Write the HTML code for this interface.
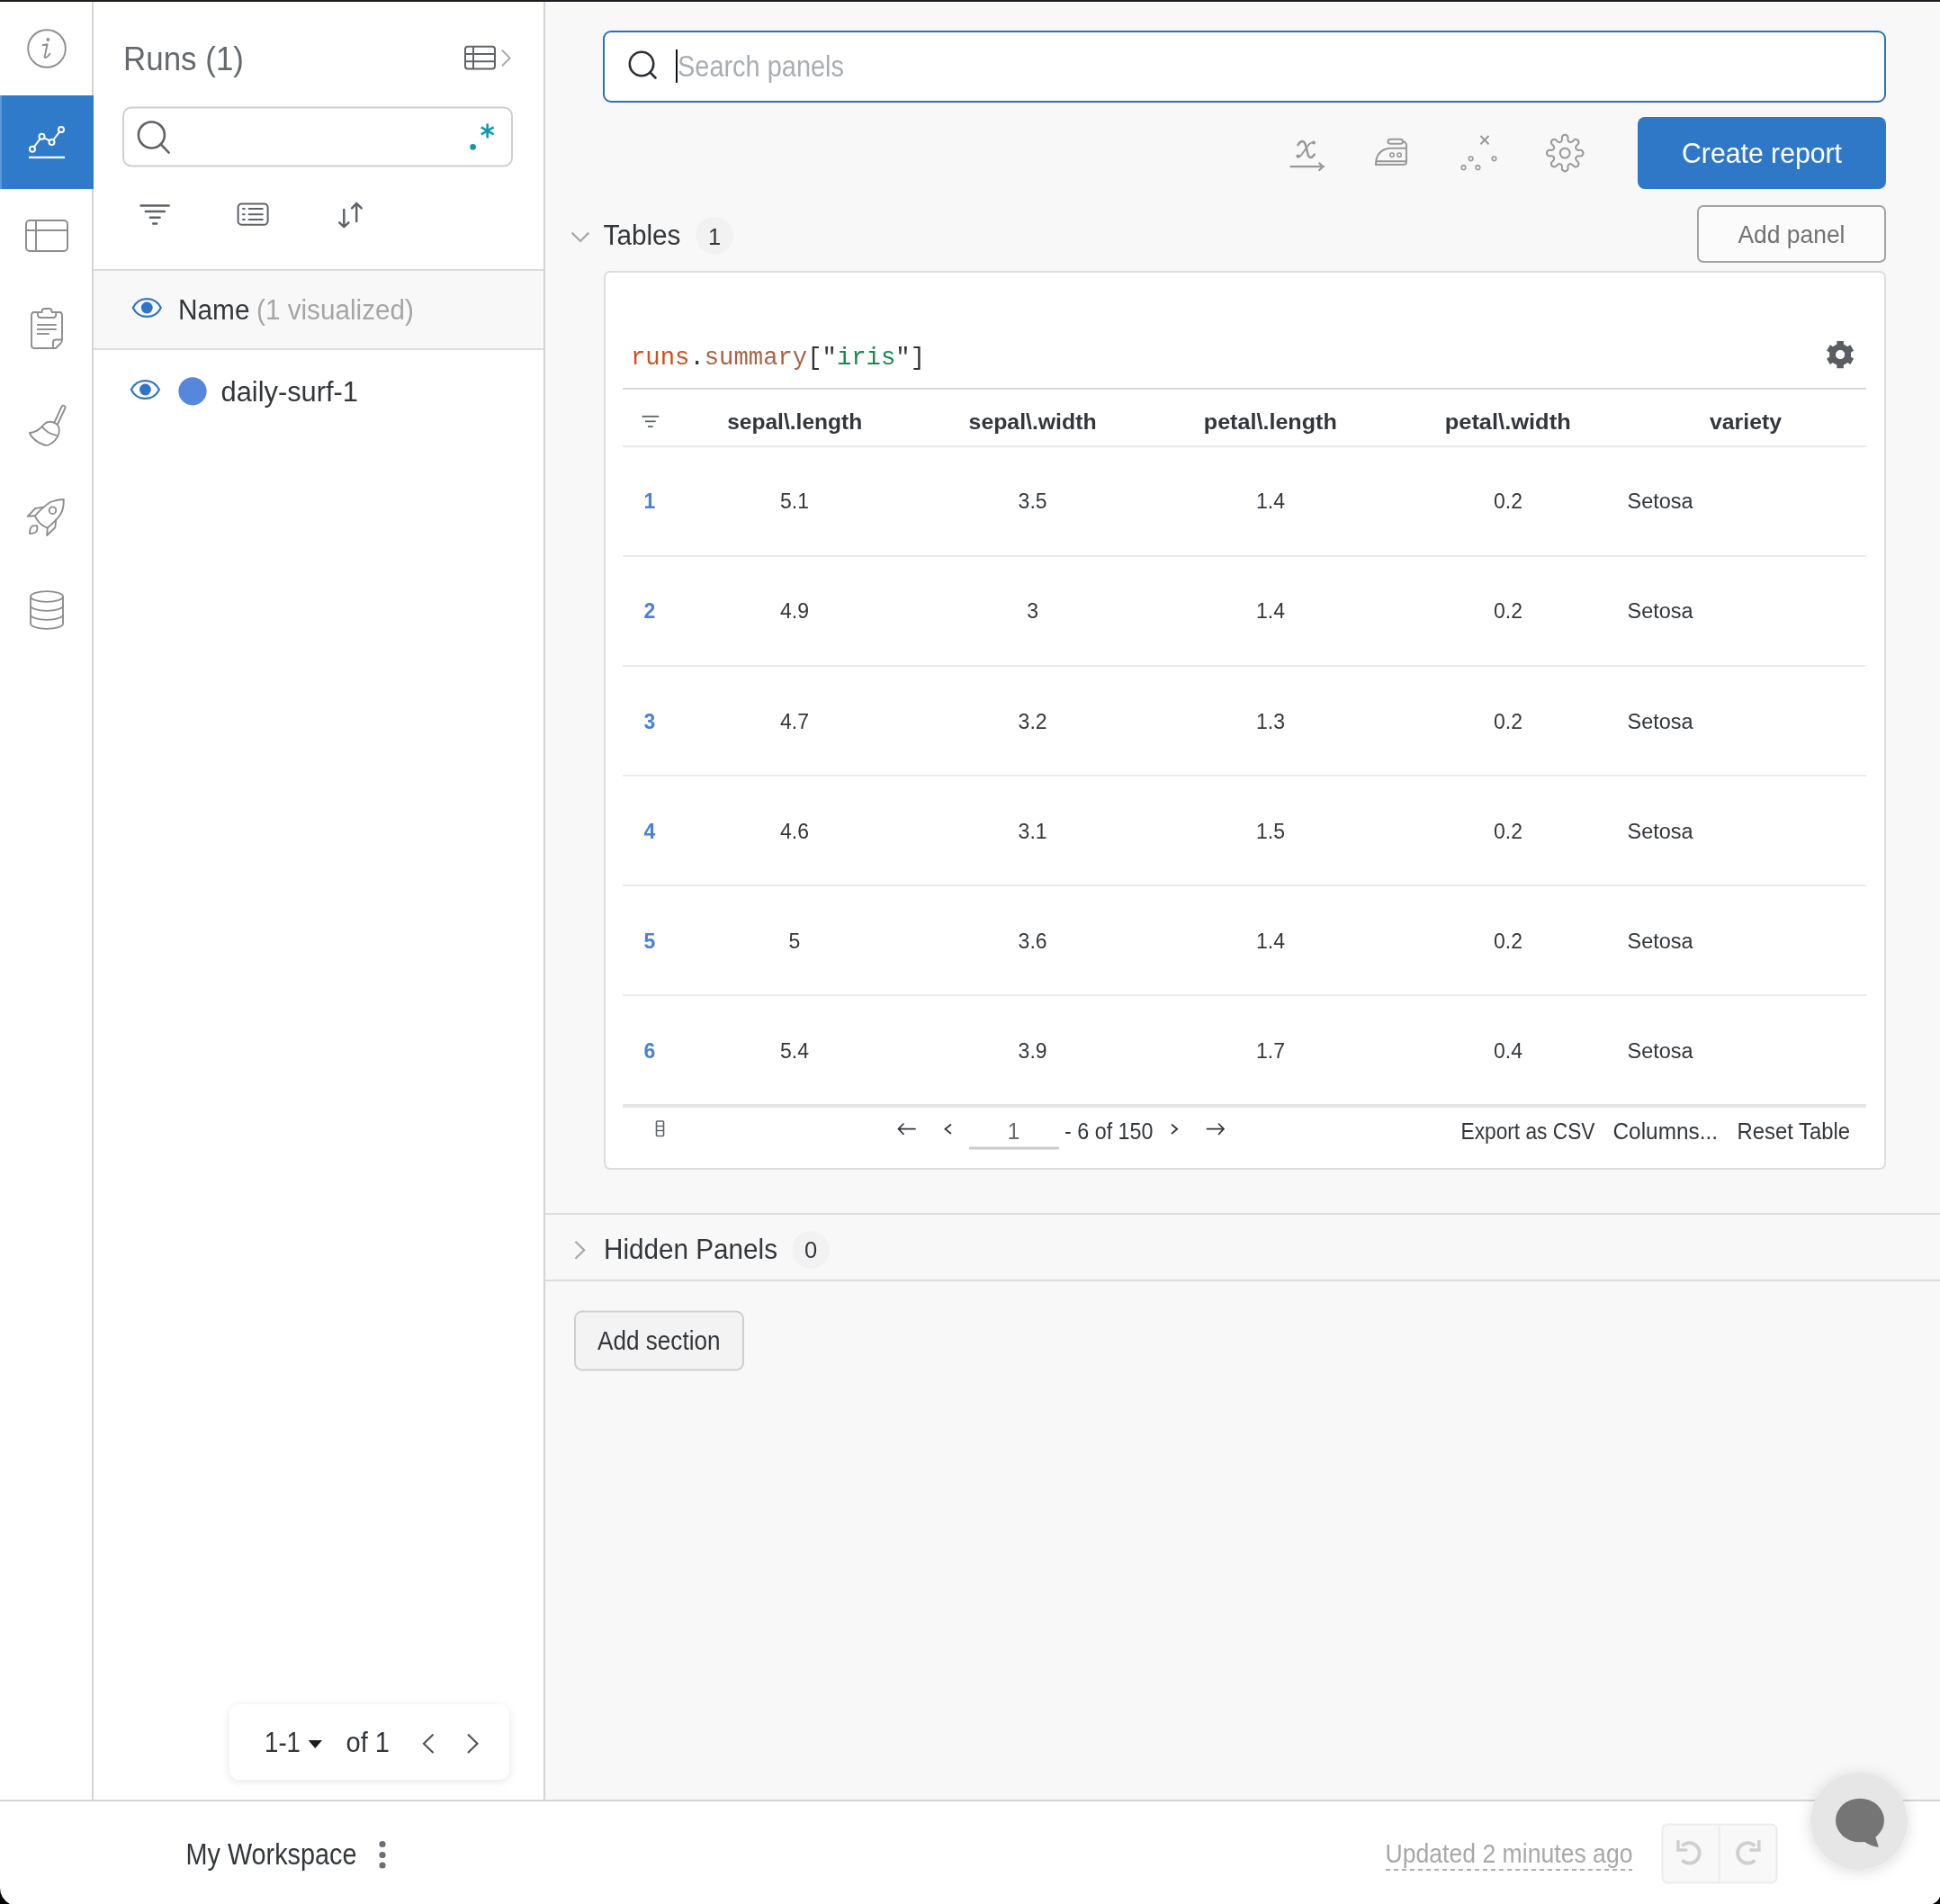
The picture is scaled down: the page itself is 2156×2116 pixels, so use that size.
<!DOCTYPE html>
<html><head><meta charset="utf-8"><title>Workspace</title>
<style>html,body{margin:0;padding:0;background:#fff;overflow:hidden;font-family:"Liberation Sans",sans-serif} svg{display:block;will-change:transform;opacity:0.999}</style>
</head><body>
<svg width="2156" height="2116" viewBox="0 0 2156 2116"><defs>
<filter id="sh" x="-20%" y="-40%" width="140%" height="180%"><feDropShadow dx="0" dy="2" stdDeviation="5" flood-color="#000" flood-opacity="0.10"/></filter>
<filter id="sh2" x="-30%" y="-30%" width="160%" height="160%"><feDropShadow dx="0" dy="2" stdDeviation="8" flood-color="#000" flood-opacity="0.14"/></filter>
</defs><rect x="0" y="0" width="2156" height="2116" fill="#ffffff"/><rect x="606" y="3" width="1550" height="1997" fill="#f8f8f8"/><rect x="0" y="0" width="2156" height="2" fill="#1b1d22"/><rect x="102" y="2" width="2" height="1998" fill="#d4d4d4"/><rect x="604" y="2" width="2" height="1998" fill="#d4d4d4"/><rect x="0" y="2000" width="2156" height="2" fill="#d4d4d4"/><rect x="0" y="106" width="104" height="104" fill="#2f7bca"/><rect x="0" y="106" width="2" height="104" fill="#ffffff" fill-opacity="0.22"/><circle cx="52" cy="54" r="20.8" fill="none" stroke="#8e8e8e" stroke-width="1.9"/><circle cx="53.3" cy="44" r="1.9" fill="#8e8e8e"/><path d="M47.6,50.3 L52.6,49.2 L49.6,62.8 Q49.4,64.3 51,63.9 Q53.6,63 55.4,59.8" fill="none" stroke="#8e8e8e" stroke-width="1.9" stroke-linejoin="round" stroke-linecap="round"/><line x1="37.80" y1="163.40" x2="44.70" y2="154.20" stroke="#fff" stroke-width="2"/><line x1="49.12" y1="153.25" x2="54.88" y2="156.45" stroke="#fff" stroke-width="2"/><line x1="59.30" y1="155.50" x2="66.20" y2="146.30" stroke="#fff" stroke-width="2"/><circle cx="36" cy="165.8" r="3" fill="none" stroke="#fff" stroke-width="2"/><circle cx="46.5" cy="151.8" r="3" fill="none" stroke="#fff" stroke-width="2"/><circle cx="57.5" cy="157.9" r="3" fill="none" stroke="#fff" stroke-width="2"/><circle cx="68" cy="143.9" r="3" fill="none" stroke="#fff" stroke-width="2"/><rect x="32" y="173.8" width="40" height="2.3" fill="#fff"/><rect x="29" y="245" width="46" height="34" rx="4" fill="none" stroke="#8e8e8e" stroke-width="2"/><line x1="29" y1="256" x2="75" y2="256" stroke="#8e8e8e" stroke-width="2"/><line x1="40" y1="245" x2="40" y2="279" stroke="#8e8e8e" stroke-width="2"/><path d="M59,387 L38.5,387 Q35,387 35,383.5 L35,350.5 Q35,347 38.5,347 L46.6,347 L46.6,346 Q46.6,343 50,343 L54.5,343 Q57.6,343 57.6,346 L57.6,347 L66,347 Q69,347 69,350.5 L69,377.5 Q69,380 67,382 L62,387 Q61,387 59,387 Z" fill="none" stroke="#8e8e8e" stroke-width="1.9" stroke-linejoin="round"/><path d="M42,347 L42,350 Q42,353 45.5,353 L59,353 Q62.2,353 62.2,350 L62.2,347" fill="none" stroke="#8e8e8e" stroke-width="1.9"/><path d="M59,387 L59,380.5 Q59,377.5 62,377.5 L69,377.5" fill="none" stroke="#8e8e8e" stroke-width="1.9"/><line x1="41" y1="361" x2="62.8" y2="361" stroke="#8e8e8e" stroke-width="1.9"/><line x1="41" y1="366" x2="62.8" y2="366" stroke="#8e8e8e" stroke-width="1.9"/><line x1="41" y1="371" x2="54.7" y2="371" stroke="#8e8e8e" stroke-width="1.9"/><path d="M60.6,469.3 L68.4,452 Q69.6,450 71.4,451 Q73,452 72.3,454 L64,471.5" fill="none" stroke="#8e8e8e" stroke-width="1.9" stroke-linecap="round"/><path d="M46.8,474 Q53,465.5 62.5,471 Q67,474 65.3,482 Q63,490 54,494.5 Q52,495.5 48,494 Q37,490 32.7,481 Q40,481 46.8,474 Z" fill="none" stroke="#8e8e8e" stroke-width="1.9" stroke-linejoin="round"/><path d="M46.8,474 Q52,482 63.5,484" fill="none" stroke="#8e8e8e" stroke-width="1.9"/><path d="M38.8,573.3 Q48,563 56,558 Q63,555 70.8,555 Q71,566 67,572 Q63,578 52.7,586.7 Q43,583 38.8,573.3 Z" fill="none" stroke="#8e8e8e" stroke-width="1.9" stroke-linejoin="round"/><path d="M48.5,563.6 L39.3,565 L30.6,573.8 L38.8,573.3" fill="none" stroke="#8e8e8e" stroke-width="1.9" stroke-linejoin="round"/><path d="M62.3,576.8 L61.3,586.3 L52.2,595 L52.7,586.7" fill="none" stroke="#8e8e8e" stroke-width="1.9" stroke-linejoin="round"/><circle cx="58.5" cy="567.2" r="3.8" fill="none" stroke="#8e8e8e" stroke-width="1.9"/><path d="M33,593 Q33,587 35.5,585 Q38,583.5 41.3,584.5 Q42,588 40.5,590.5 Q38.5,593 33,593 Z" fill="none" stroke="#8e8e8e" stroke-width="1.9" stroke-linejoin="round"/><ellipse cx="52" cy="663" rx="18" ry="5.9" fill="none" stroke="#8e8e8e" stroke-width="1.9"/><path d="M34,673 A18,5.9 0 0 0 70,673" fill="none" stroke="#8e8e8e" stroke-width="1.9"/><path d="M34,683 A18,5.9 0 0 0 70,683" fill="none" stroke="#8e8e8e" stroke-width="1.9"/><path d="M34,693 A18,5.9 0 0 0 70,693" fill="none" stroke="#8e8e8e" stroke-width="1.9"/><line x1="34" y1="663" x2="34" y2="693" stroke="#8e8e8e" stroke-width="1.9"/><line x1="70" y1="663" x2="70" y2="693" stroke="#8e8e8e" stroke-width="1.9"/><text x="137" y="77.6" font-family="Liberation Sans" font-size="37" fill="#65696e" textLength="134" lengthAdjust="spacingAndGlyphs">Runs (1)</text><rect x="517" y="51.8" width="33" height="24.7" rx="3" fill="none" stroke="#5f6368" stroke-width="2"/><line x1="517" y1="60" x2="550" y2="60" stroke="#5f6368" stroke-width="2"/><line x1="517" y1="68.3" x2="550" y2="68.3" stroke="#5f6368" stroke-width="2"/><line x1="526" y1="51.8" x2="526" y2="76.5" stroke="#5f6368" stroke-width="2"/><path d="M558,55.7 L566.6,64.5 L558,73.2" fill="none" stroke="#aaaaaa" stroke-width="2"/><rect x="137" y="119.4" width="432" height="65" rx="9" fill="#fff" stroke="#cfcfcf" stroke-width="2"/><circle cx="168.4" cy="150" r="14.5" fill="none" stroke="#5f6368" stroke-width="2.6"/><line x1="178.8" y1="160.4" x2="187.6" y2="169.6" stroke="#5f6368" stroke-width="2.6" stroke-linecap="round"/><circle cx="525.6" cy="163.4" r="3.3" fill="#1199aa"/><line x1="541.70" y1="137.40" x2="541.70" y2="153.40" stroke="#1199aa" stroke-width="2.6"/><line x1="534.77" y1="141.40" x2="548.63" y2="149.40" stroke="#1199aa" stroke-width="2.6"/><line x1="548.63" y1="141.40" x2="534.77" y2="149.40" stroke="#1199aa" stroke-width="2.6"/><line x1="156.6" y1="228.4" x2="187.60000000000002" y2="228.4" stroke="#5f6368" stroke-width="2.5" stroke-linecap="round"/><line x1="161.79999999999998" y1="235" x2="182.8" y2="235" stroke="#5f6368" stroke-width="2.5" stroke-linecap="round"/><line x1="166.79999999999998" y1="241.7" x2="177.60000000000002" y2="241.7" stroke="#5f6368" stroke-width="2.5" stroke-linecap="round"/><line x1="170.2" y1="248.6" x2="174.10000000000002" y2="248.6" stroke="#5f6368" stroke-width="2.5" stroke-linecap="round"/><rect x="264.6" y="226.6" width="33" height="23.2" rx="4" fill="none" stroke="#5f6368" stroke-width="2"/><line x1="270" y1="232" x2="271.8" y2="232" stroke="#5f6368" stroke-width="2" stroke-linecap="round"/><line x1="276.6" y1="232" x2="291.8" y2="232" stroke="#5f6368" stroke-width="2" stroke-linecap="round"/><line x1="270" y1="238.3" x2="271.8" y2="238.3" stroke="#5f6368" stroke-width="2" stroke-linecap="round"/><line x1="276.6" y1="238.3" x2="291.8" y2="238.3" stroke="#5f6368" stroke-width="2" stroke-linecap="round"/><line x1="270" y1="244.1" x2="271.8" y2="244.1" stroke="#5f6368" stroke-width="2" stroke-linecap="round"/><line x1="276.6" y1="244.1" x2="291.8" y2="244.1" stroke="#5f6368" stroke-width="2" stroke-linecap="round"/><path d="M382.3,233 L382.3,251.4 M377.2,247.3 L382.3,252.2 L387.4,247.3" fill="none" stroke="#5f6368" stroke-width="2.5" stroke-linecap="round" stroke-linejoin="round"/><path d="M396.2,226 L396.2,246 M391.1,231.3 L396.2,226 L401.7,231.3" fill="none" stroke="#5f6368" stroke-width="2.5" stroke-linecap="round" stroke-linejoin="round"/><rect x="104" y="299" width="500" height="2" fill="#dcdcdc"/><rect x="104" y="301" width="500" height="86" fill="#f8f8f8"/><rect x="104" y="387" width="500" height="2" fill="#dcdcdc"/><path d="M147.8,342 C154.3,328.7 172.3,328.7 178.8,342 C172.3,355.3 154.3,355.3 147.8,342 Z" fill="none" stroke="#2f74c6" stroke-width="2.2" stroke-linejoin="round"/><circle cx="163.3" cy="342" r="6.4" fill="#2f74c6"/><text x="198" y="355" font-family="Liberation Sans" font-size="31" fill="#33373b" textLength="79.5" lengthAdjust="spacingAndGlyphs">Name</text><text x="285" y="355" font-family="Liberation Sans" font-size="31" fill="#a6a6a6" textLength="175" lengthAdjust="spacingAndGlyphs">(1 visualized)</text><path d="M145.9,433 C152.4,419.7 170.4,419.7 176.9,433 C170.4,446.3 152.4,446.3 145.9,433 Z" fill="none" stroke="#2f74c6" stroke-width="2.2" stroke-linejoin="round"/><circle cx="161.4" cy="433" r="6.4" fill="#2f74c6"/><circle cx="214" cy="434.8" r="15.6" fill="#5588dd"/><text x="245.5" y="445.5" font-family="Liberation Sans" font-size="31" fill="#33373b" textLength="152.5" lengthAdjust="spacingAndGlyphs">daily-surf-1</text><rect x="255" y="1894" width="311" height="84" rx="12" fill="#fff" filter="url(#sh)"/><text x="294" y="1947" font-family="Liberation Sans" font-size="31" fill="#33373b" textLength="40" lengthAdjust="spacingAndGlyphs">1-1</text><path d="M342.6,1934 L358,1934 L350.3,1943 Z" fill="#1b1d22"/><text x="384.5" y="1947" font-family="Liberation Sans" font-size="31" fill="#33373b" textLength="48.5" lengthAdjust="spacingAndGlyphs">of 1</text><path d="M481.5,1927.5 L471,1937.7 L481.5,1948" fill="none" stroke="#555" stroke-width="2.2"/><path d="M520,1927.5 L530.5,1937.7 L520,1948" fill="none" stroke="#555" stroke-width="2.2"/><text x="206.5" y="2071.7" font-family="Liberation Sans" font-size="33" fill="#33373b" textLength="190" lengthAdjust="spacingAndGlyphs">My Workspace</text><circle cx="425" cy="2049.5" r="3.6" fill="#6b6f73"/><circle cx="425" cy="2061.5" r="3.6" fill="#6b6f73"/><circle cx="425" cy="2073" r="3.6" fill="#6b6f73"/><text x="1539.5" y="2070" font-family="Liberation Sans" font-size="29" fill="#a8a8a8" textLength="275" lengthAdjust="spacingAndGlyphs">Updated 2 minutes ago</text><line x1="1540" y1="2078" x2="1814" y2="2078" stroke="#b0b0b0" stroke-width="2" stroke-dasharray="5,4"/><rect x="1847.5" y="2027.5" width="127" height="65" rx="6" fill="#f8f8f8" stroke="#ececec" stroke-width="2"/><line x1="1910.5" y1="2028" x2="1910.5" y2="2092" stroke="#ececec" stroke-width="2"/><path d="M1869.4,2051.4 A11.3,11.3 0 1 1 1869.4,2067.4" fill="none" stroke="#cfcfcf" stroke-width="3.8"/><path d="M1863.2,2045.2 L1866.7,2045.2 L1866.7,2054.2 L1875.3,2054.2 L1875.3,2057.7 L1863.2,2057.7 Z" fill="#cfcfcf"/><g transform="matrix(-1,0,0,1,3819.8,0)"><path d="M1869.4,2051.4 A11.3,11.3 0 1 1 1869.4,2067.4" fill="none" stroke="#cfcfcf" stroke-width="3.8"/><path d="M1863.2,2045.2 L1866.7,2045.2 L1866.7,2054.2 L1875.3,2054.2 L1875.3,2057.7 L1863.2,2057.7 Z" fill="#cfcfcf"/></g><circle cx="2066" cy="2024" r="54" fill="#e6e6e6" filter="url(#sh2)"/><ellipse cx="2067" cy="2023" rx="27" ry="24.3" fill="#757575"/><path d="M2071.5,2046.5 Q2080,2052.5 2087.9,2052.8 L2084.1,2040.9 Z" fill="#757575"/><path d="M0,2098 A20,20 0 0 0 11,2116 L0,2116 Z" fill="#000"/><path d="M2156,2108 A16,16 0 0 1 2148,2116 L2156,2116 Z" fill="#000"/><rect x="671" y="35" width="1424" height="78" rx="8" fill="#fff" stroke="#2a6fc2" stroke-width="2"/><circle cx="713" cy="71" r="13.2" fill="none" stroke="#2c3035" stroke-width="2.6"/><line x1="722.5" y1="80.5" x2="728.5" y2="86.5" stroke="#2c3035" stroke-width="2.6" stroke-linecap="round"/><rect x="751" y="55" width="2" height="37" fill="#111"/><text x="753" y="85" font-family="Liberation Sans" font-size="33" fill="#a9aeb3" textLength="185" lengthAdjust="spacingAndGlyphs">Search panels</text><path d="M1442.5,161.2 Q1445,156.5 1448,157.2 Q1450.5,158 1451.5,163 L1453.5,171.5 Q1454.8,176 1457.5,174.8 Q1459.5,173.8 1460.8,171.6" fill="none" stroke="#999999" stroke-width="2.6" stroke-linecap="round"/><path d="M1460.3,158.2 Q1457,157.5 1454,161.5 L1447.5,170.5 Q1445,174.8 1442.6,174" fill="none" stroke="#999999" stroke-width="1.8" stroke-linecap="round"/><circle cx="1460" cy="158.6" r="2" fill="#999999"/><circle cx="1442.6" cy="173.6" r="2.2" fill="#999999"/><path d="M1434.4,185.2 L1471,185.2 M1466.2,181.4 L1470.5,185.2 L1466.2,189" fill="none" stroke="#999999" stroke-width="2.2" stroke-linecap="round" stroke-linejoin="round"/><rect x="1542.5" y="154.8" width="16.5" height="5" rx="2.5" fill="none" stroke="#999999" stroke-width="2"/><path d="M1559,157 Q1563,158 1563,162 L1563,180 Q1563,183 1560,183 L1529,183 Q1529,167 1544,164.7 L1563,164.7" fill="none" stroke="#999999" stroke-width="2"/><line x1="1529.5" y1="179.2" x2="1563" y2="179.2" stroke="#999999" stroke-width="2"/><circle cx="1547" cy="172.2" r="2.2" fill="none" stroke="#999999" stroke-width="1.6"/><circle cx="1555" cy="172.2" r="2.2" fill="none" stroke="#999999" stroke-width="1.6"/><path d="M1645.5,151 L1654.5,160.3 M1654.5,151 L1645.5,160.3" stroke="#999999" stroke-width="2"/><circle cx="1634.6" cy="176.3" r="2.3" fill="none" stroke="#999999" stroke-width="1.6"/><circle cx="1660.5" cy="176.3" r="2.3" fill="none" stroke="#999999" stroke-width="1.6"/><circle cx="1626.5" cy="186.2" r="2.3" fill="none" stroke="#999999" stroke-width="1.6"/><circle cx="1642.4" cy="186.2" r="2.3" fill="none" stroke="#999999" stroke-width="1.6"/><path d="M1734.11,157.81 C1735.38,157.29 1735.02,157.99 1735.79,155.90 C1736.56,153.82 1734.89,152.38 1736.67,150.87 C1738.45,149.35 1739.95,149.35 1741.73,150.87 C1743.51,152.38 1741.84,153.82 1742.61,155.90 C1743.38,157.99 1743.02,157.29 1744.29,157.81 C1745.56,158.34 1744.81,158.58 1746.83,157.65 C1748.84,156.72 1748.68,154.52 1751.01,154.71 C1753.34,154.90 1754.40,155.96 1754.59,158.29 C1754.78,160.62 1752.58,160.46 1751.65,162.47 C1750.72,164.49 1750.96,163.74 1751.49,165.01 C1752.01,166.28 1751.31,165.92 1753.40,166.69 C1755.48,167.46 1756.92,165.79 1758.43,167.57 C1759.95,169.35 1759.95,170.85 1758.43,172.63 C1756.92,174.41 1755.48,172.74 1753.40,173.51 C1751.31,174.28 1752.01,173.92 1751.49,175.19 C1750.96,176.46 1750.72,175.71 1751.65,177.73 C1752.58,179.74 1754.78,179.58 1754.59,181.91 C1754.40,184.24 1753.34,185.30 1751.01,185.49 C1748.68,185.68 1748.84,183.48 1746.83,182.55 C1744.81,181.62 1745.56,181.86 1744.29,182.39 C1743.02,182.91 1743.38,182.21 1742.61,184.30 C1741.84,186.38 1743.51,187.82 1741.73,189.33 C1739.95,190.85 1738.45,190.85 1736.67,189.33 C1734.89,187.82 1736.56,186.38 1735.79,184.30 C1735.02,182.21 1735.38,182.91 1734.11,182.39 C1732.84,181.86 1733.59,181.62 1731.57,182.55 C1729.56,183.48 1729.72,185.68 1727.39,185.49 C1725.06,185.30 1724.00,184.24 1723.81,181.91 C1723.62,179.58 1725.82,179.74 1726.75,177.73 C1727.68,175.71 1727.44,176.46 1726.91,175.19 C1726.39,173.92 1727.09,174.28 1725.00,173.51 C1722.92,172.74 1721.48,174.41 1719.97,172.63 C1718.45,170.85 1718.45,169.35 1719.97,167.57 C1721.48,165.79 1722.92,167.46 1725.00,166.69 C1727.09,165.92 1726.39,166.28 1726.91,165.01 C1727.44,163.74 1727.68,164.49 1726.75,162.47 C1725.82,160.46 1723.62,160.62 1723.81,158.29 C1724.00,155.96 1725.06,154.90 1727.39,154.71 C1729.72,154.52 1729.56,156.72 1731.57,157.65 C1733.59,158.58 1732.84,158.34 1734.11,157.81 Z" fill="none" stroke="#999999" stroke-width="2" stroke-linejoin="round"/><circle cx="1739.2" cy="170.1" r="5.4" fill="none" stroke="#999999" stroke-width="2"/><rect x="1820" y="130" width="276" height="80" rx="8" fill="#2f78c8"/><text x="1869" y="181.3" font-family="Liberation Sans" font-size="32" fill="#ffffff" textLength="178" lengthAdjust="spacingAndGlyphs">Create report</text><rect x="1887" y="229" width="208" height="62" rx="6" fill="#fbfbfb" stroke="#a3a3a3" stroke-width="2"/><text x="1931.5" y="270.2" font-family="Liberation Sans" font-size="28.5" fill="#707274" textLength="119" lengthAdjust="spacingAndGlyphs">Add panel</text><path d="M635.6,258.6 L645,268 L654.4,258.6" fill="none" stroke="#a8a8a8" stroke-width="2.2"/><text x="670.5" y="272" font-family="Liberation Sans" font-size="31" fill="#33373b" textLength="86" lengthAdjust="spacingAndGlyphs">Tables</text><circle cx="794" cy="261.8" r="20.8" fill="#f2f2f2"/><text x="794" y="271.6" font-family="Liberation Sans" font-size="25.5" fill="#33373b" text-anchor="middle">1</text><rect x="672" y="302" width="1423" height="997" rx="6" fill="#fff" stroke="#dddddd" stroke-width="2"/><text x="701" y="405" font-family="Liberation Mono" font-size="26.8" textLength="327" lengthAdjust="spacingAndGlyphs"><tspan fill="#d24e1c">runs</tspan><tspan fill="#333333">.</tspan><tspan fill="#a86346">summary</tspan><tspan fill="#333333">[&quot;</tspan><tspan fill="#168a4a">iris</tspan><tspan fill="#333333">&quot;]</tspan></text><path d="M2041.35,382.70 L2041.35,378.90 L2048.85,378.90 L2048.85,382.70 A12.0,12.0 0 0 1 2053.10,385.15 L2053.10,385.15 L2056.39,383.25 L2060.14,389.75 L2056.85,391.65 A12.0,12.0 0 0 1 2056.85,396.55 L2056.85,396.55 L2060.14,398.45 L2056.39,404.95 L2053.10,403.05 A12.0,12.0 0 0 1 2048.85,405.50 L2048.85,405.50 L2048.85,409.30 L2041.35,409.30 L2041.35,405.50 A12.0,12.0 0 0 1 2037.10,403.05 L2037.10,403.05 L2033.81,404.95 L2030.06,398.45 L2033.35,396.55 A12.0,12.0 0 0 1 2033.35,391.65 L2033.35,391.65 L2030.06,389.75 L2033.81,383.25 L2037.10,385.15 A12.0,12.0 0 0 1 2041.35,382.70 Z M2050.2,394.1 A5.1,5.1 0 1 0 2040.0,394.1 A5.1,5.1 0 1 0 2050.2,394.1 Z" fill="#5a5e62" fill-rule="evenodd"/><rect x="692" y="431" width="1382" height="2" fill="#d9d9d9"/><rect x="692" y="495" width="1382" height="2" fill="#e8e8e8"/><line x1="713.5" y1="462.8" x2="732.2" y2="462.8" stroke="#5f6368" stroke-width="1.8"/><line x1="717" y1="468.3" x2="728.7" y2="468.3" stroke="#5f6368" stroke-width="1.8"/><line x1="720" y1="474" x2="725.7" y2="474" stroke="#5f6368" stroke-width="1.8"/><text x="883.2" y="477" font-family="Liberation Sans" font-size="24" fill="#33373b" font-weight="700" text-anchor="middle" textLength="150" lengthAdjust="spacingAndGlyphs">sepal\.length</text><text x="1147.6" y="477" font-family="Liberation Sans" font-size="24" fill="#33373b" font-weight="700" text-anchor="middle" textLength="142" lengthAdjust="spacingAndGlyphs">sepal\.width</text><text x="1411.8" y="477" font-family="Liberation Sans" font-size="24" fill="#33373b" font-weight="700" text-anchor="middle" textLength="148" lengthAdjust="spacingAndGlyphs">petal\.length</text><text x="1675.7" y="477" font-family="Liberation Sans" font-size="24" fill="#33373b" font-weight="700" text-anchor="middle" textLength="140" lengthAdjust="spacingAndGlyphs">petal\.width</text><text x="1940" y="477" font-family="Liberation Sans" font-size="24" fill="#33373b" font-weight="700" text-anchor="middle" textLength="80" lengthAdjust="spacingAndGlyphs">variety</text><text x="722" y="565.3" font-family="Liberation Sans" font-size="23" fill="#4a80d8" font-weight="700" text-anchor="middle">1</text><text x="883" y="565.3" font-family="Liberation Sans" font-size="23" fill="#33373b" text-anchor="middle">5.1</text><text x="1147.6" y="565.3" font-family="Liberation Sans" font-size="23" fill="#33373b" text-anchor="middle">3.5</text><text x="1412" y="565.3" font-family="Liberation Sans" font-size="23" fill="#33373b" text-anchor="middle">1.4</text><text x="1676" y="565.3" font-family="Liberation Sans" font-size="23" fill="#33373b" text-anchor="middle">0.2</text><text x="1808.5" y="565.3" font-family="Liberation Sans" font-size="23" fill="#33373b" textLength="73" lengthAdjust="spacingAndGlyphs">Setosa</text><rect x="692" y="617" width="1382" height="2" fill="#ebebeb"/><text x="722" y="687.4" font-family="Liberation Sans" font-size="23" fill="#4a80d8" font-weight="700" text-anchor="middle">2</text><text x="883" y="687.4" font-family="Liberation Sans" font-size="23" fill="#33373b" text-anchor="middle">4.9</text><text x="1147.6" y="687.4" font-family="Liberation Sans" font-size="23" fill="#33373b" text-anchor="middle">3</text><text x="1412" y="687.4" font-family="Liberation Sans" font-size="23" fill="#33373b" text-anchor="middle">1.4</text><text x="1676" y="687.4" font-family="Liberation Sans" font-size="23" fill="#33373b" text-anchor="middle">0.2</text><text x="1808.5" y="687.4" font-family="Liberation Sans" font-size="23" fill="#33373b" textLength="73" lengthAdjust="spacingAndGlyphs">Setosa</text><rect x="692" y="739" width="1382" height="2" fill="#ebebeb"/><text x="722" y="809.5" font-family="Liberation Sans" font-size="23" fill="#4a80d8" font-weight="700" text-anchor="middle">3</text><text x="883" y="809.5" font-family="Liberation Sans" font-size="23" fill="#33373b" text-anchor="middle">4.7</text><text x="1147.6" y="809.5" font-family="Liberation Sans" font-size="23" fill="#33373b" text-anchor="middle">3.2</text><text x="1412" y="809.5" font-family="Liberation Sans" font-size="23" fill="#33373b" text-anchor="middle">1.3</text><text x="1676" y="809.5" font-family="Liberation Sans" font-size="23" fill="#33373b" text-anchor="middle">0.2</text><text x="1808.5" y="809.5" font-family="Liberation Sans" font-size="23" fill="#33373b" textLength="73" lengthAdjust="spacingAndGlyphs">Setosa</text><rect x="692" y="861" width="1382" height="2" fill="#ebebeb"/><text x="722" y="931.5999999999999" font-family="Liberation Sans" font-size="23" fill="#4a80d8" font-weight="700" text-anchor="middle">4</text><text x="883" y="931.5999999999999" font-family="Liberation Sans" font-size="23" fill="#33373b" text-anchor="middle">4.6</text><text x="1147.6" y="931.5999999999999" font-family="Liberation Sans" font-size="23" fill="#33373b" text-anchor="middle">3.1</text><text x="1412" y="931.5999999999999" font-family="Liberation Sans" font-size="23" fill="#33373b" text-anchor="middle">1.5</text><text x="1676" y="931.5999999999999" font-family="Liberation Sans" font-size="23" fill="#33373b" text-anchor="middle">0.2</text><text x="1808.5" y="931.5999999999999" font-family="Liberation Sans" font-size="23" fill="#33373b" textLength="73" lengthAdjust="spacingAndGlyphs">Setosa</text><rect x="692" y="983" width="1382" height="2" fill="#ebebeb"/><text x="722" y="1053.6999999999998" font-family="Liberation Sans" font-size="23" fill="#4a80d8" font-weight="700" text-anchor="middle">5</text><text x="883" y="1053.6999999999998" font-family="Liberation Sans" font-size="23" fill="#33373b" text-anchor="middle">5</text><text x="1147.6" y="1053.6999999999998" font-family="Liberation Sans" font-size="23" fill="#33373b" text-anchor="middle">3.6</text><text x="1412" y="1053.6999999999998" font-family="Liberation Sans" font-size="23" fill="#33373b" text-anchor="middle">1.4</text><text x="1676" y="1053.6999999999998" font-family="Liberation Sans" font-size="23" fill="#33373b" text-anchor="middle">0.2</text><text x="1808.5" y="1053.6999999999998" font-family="Liberation Sans" font-size="23" fill="#33373b" textLength="73" lengthAdjust="spacingAndGlyphs">Setosa</text><rect x="692" y="1105" width="1382" height="2" fill="#ebebeb"/><text x="722" y="1175.8" font-family="Liberation Sans" font-size="23" fill="#4a80d8" font-weight="700" text-anchor="middle">6</text><text x="883" y="1175.8" font-family="Liberation Sans" font-size="23" fill="#33373b" text-anchor="middle">5.4</text><text x="1147.6" y="1175.8" font-family="Liberation Sans" font-size="23" fill="#33373b" text-anchor="middle">3.9</text><text x="1412" y="1175.8" font-family="Liberation Sans" font-size="23" fill="#33373b" text-anchor="middle">1.7</text><text x="1676" y="1175.8" font-family="Liberation Sans" font-size="23" fill="#33373b" text-anchor="middle">0.4</text><text x="1808.5" y="1175.8" font-family="Liberation Sans" font-size="23" fill="#33373b" textLength="73" lengthAdjust="spacingAndGlyphs">Setosa</text><rect x="692" y="1227" width="1382" height="4" fill="#e6e6e6"/><rect x="729.5" y="1246" width="8" height="16.5" rx="1" fill="none" stroke="#5f6368" stroke-width="1.6"/><line x1="729.5" y1="1251.5" x2="737.5" y2="1251.5" stroke="#5f6368" stroke-width="1.4"/><line x1="729.5" y1="1256.5" x2="737.5" y2="1256.5" stroke="#5f6368" stroke-width="1.4"/><path d="M1017,1254.7 L998.5,1254.7 M1004,1249 L998.5,1254.7 L1004,1260.4" fill="none" stroke="#33373b" stroke-width="1.7" stroke-linecap="round" stroke-linejoin="round"/><path d="M1057,1249.5 L1050.5,1254.7 L1057,1260" fill="none" stroke="#33373b" stroke-width="1.8"/><text x="1126.5" y="1266" font-family="Liberation Sans" font-size="25" fill="#6a6e72" text-anchor="middle">1</text><rect x="1077" y="1274.5" width="100" height="3" fill="#cccccc"/><text x="1183" y="1266" font-family="Liberation Sans" font-size="25" fill="#33373b" textLength="98.5" lengthAdjust="spacingAndGlyphs">- 6 of 150</text><path d="M1302,1249.5 L1308.2,1254.7 L1302,1260" fill="none" stroke="#33373b" stroke-width="1.8"/><path d="M1341.5,1254.7 L1360,1254.7 M1354.5,1249 L1360,1254.7 L1354.5,1260.4" fill="none" stroke="#33373b" stroke-width="1.7" stroke-linecap="round" stroke-linejoin="round"/><text x="1623.5" y="1266" font-family="Liberation Sans" font-size="25" fill="#33373b" textLength="149" lengthAdjust="spacingAndGlyphs">Export as CSV</text><text x="1792.5" y="1266" font-family="Liberation Sans" font-size="25" fill="#33373b" textLength="116.5" lengthAdjust="spacingAndGlyphs">Columns...</text><text x="1930.5" y="1266" font-family="Liberation Sans" font-size="25" fill="#33373b" textLength="125.5" lengthAdjust="spacingAndGlyphs">Reset Table</text><rect x="606" y="1348" width="1550" height="2" fill="#dcdcdc"/><rect x="606" y="1422" width="1550" height="2" fill="#dcdcdc"/><path d="M639.5,1379.8 L649.2,1389.3 L639.5,1398.8" fill="none" stroke="#a8a8a8" stroke-width="2.2"/><text x="671" y="1399" font-family="Liberation Sans" font-size="32" fill="#33373b" textLength="193" lengthAdjust="spacingAndGlyphs">Hidden Panels</text><circle cx="901" cy="1389" r="20.8" fill="#f2f2f2"/><text x="901" y="1398" font-family="Liberation Sans" font-size="25.5" fill="#33373b" text-anchor="middle">0</text><rect x="639" y="1457.5" width="187" height="65" rx="8" fill="#f3f3f3" stroke="#cfcfcf" stroke-width="2"/><text x="664" y="1500" font-family="Liberation Sans" font-size="29" fill="#33373b" textLength="136.5" lengthAdjust="spacingAndGlyphs">Add section</text></svg>
</body></html>
